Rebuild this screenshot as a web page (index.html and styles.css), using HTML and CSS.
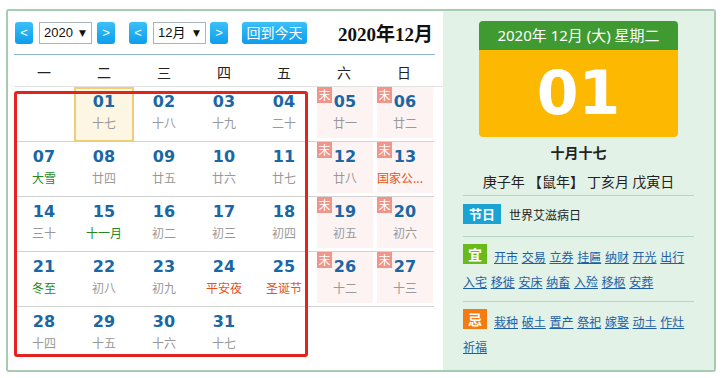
FILE: index.html
```html
<!DOCTYPE html>
<html lang="zh-CN">
  <head>
    <meta charset="UTF-8" />
    <title>万年历</title>
    <link rel="stylesheet" href="styles.css">
  </head>
  <body>
    <div class="calendar">
      <div class="cal-main">
        <div class="toolbar">
          <span class="btn nav first">&lt;</span>
          <div class="select year">2020<span class="arrow">▼</span></div>
          <span class="btn nav">&gt;</span>
          <span class="btn nav gap">&lt;</span>
          <div class="select month">12月<span class="arrow">▼</span></div>
          <span class="btn nav">&gt;</span>
          <span class="btn today-btn">回到今天</span>
          <span class="title">2020年12月</span>
        </div>

        <div class="week">
          <span>一</span><span>二</span><span>三</span><span>四</span><span>五</span><span>六</span><span>日</span>
        </div>

        <div class="days">
          <div class="day"></div>
          <div class="day today"><b>01</b><i>十七</i></div>
          <div class="day"><b>02</b><i>十八</i></div>
          <div class="day"><b>03</b><i>十九</i></div>
          <div class="day"><b>04</b><i>二十</i></div>
          <div class="day we"><div class="box"><em>末</em><b>05</b><i>廿一</i></div></div>
          <div class="day we"><div class="box"><em>末</em><b>06</b><i>廿二</i></div></div>

          <div class="day"><b>07</b><i class="term">大雪</i></div>
          <div class="day"><b>08</b><i>廿四</i></div>
          <div class="day"><b>09</b><i>廿五</i></div>
          <div class="day"><b>10</b><i>廿六</i></div>
          <div class="day"><b>11</b><i>廿七</i></div>
          <div class="day we"><div class="box"><em>末</em><b>12</b><i>廿八</i></div></div>
          <div class="day we"><div class="box"><em>末</em><b>13</b><i class="fest short">国家公...</i></div></div>

          <div class="day"><b>14</b><i>三十</i></div>
          <div class="day"><b>15</b><i class="term">十一月</i></div>
          <div class="day"><b>16</b><i>初二</i></div>
          <div class="day"><b>17</b><i>初三</i></div>
          <div class="day"><b>18</b><i>初四</i></div>
          <div class="day we"><div class="box"><em>末</em><b>19</b><i>初五</i></div></div>
          <div class="day we"><div class="box"><em>末</em><b>20</b><i>初六</i></div></div>

          <div class="day"><b>21</b><i class="term">冬至</i></div>
          <div class="day"><b>22</b><i>初八</i></div>
          <div class="day"><b>23</b><i>初九</i></div>
          <div class="day"><b>24</b><i class="fest">平安夜</i></div>
          <div class="day"><b>25</b><i class="fest">圣诞节</i></div>
          <div class="day we"><div class="box"><em>末</em><b>26</b><i>十二</i></div></div>
          <div class="day we"><div class="box"><em>末</em><b>27</b><i>十三</i></div></div>

          <div class="day last"><b>28</b><i>十四</i></div>
          <div class="day last"><b>29</b><i>十五</i></div>
          <div class="day last"><b>30</b><i>十六</i></div>
          <div class="day last"><b>31</b><i>十七</i></div>
          <div class="day last"></div>
          <div class="day last"></div>
          <div class="day last"></div>
        </div>

        <!-- annotation box over the weekdays -->
        <div class="highlight"></div>
      </div>

      <div class="side">
        <div class="date-card">
          <div class="card-head">2020年 12月 (大) 星期二</div>
          <div class="card-day">01</div>
        </div>
        <div class="lunar">十月十七</div>
        <div class="ganzhi">庚子年 【鼠年】 丁亥月 戊寅日</div>

        <div class="row festival">
          <span class="tag blue">节日</span><span class="fest-name">世界艾滋病日</span>
        </div>

        <div class="row deeds">
          <span class="tag mark green">宜</span>
          <a href="#">开市</a> <a href="#">交易</a> <a href="#">立券</a> <a href="#">挂匾</a> <a href="#">纳财</a> <a href="#">开光</a> <a href="#">出行</a> <a href="#">入宅</a> <a href="#">移徙</a> <a href="#">安床</a> <a href="#">纳畜</a> <a href="#">入殓</a> <a href="#">移柩</a> <a href="#">安葬</a>
        </div>

        <div class="row deeds">
          <span class="tag mark orange">忌</span>
          <a href="#">栽种</a> <a href="#">破土</a> <a href="#">置产</a> <a href="#">祭祀</a> <a href="#">嫁娶</a> <a href="#">动土</a> <a href="#">作灶</a> <a href="#">祈福</a>
        </div>
      </div>
    </div>
  </body>
</html>
```

FILE: styles.css
```css
* {
  box-sizing: border-box;
}

body {
  margin: 0;
  font-family: "Noto Sans CJK SC", sans-serif;
  color: #333;
  background: #fff;
}

.calendar {
  display: flex;
  width: 710px;
  height: 363px;
  margin: 9px 0 0 6px;
  border: 2px solid #a6cbb0;
  border-radius: 3px;
}

/* left: month grid */
.cal-main {
  position: relative;
  width: 435px;
  padding: 11px 0 0 6px;
  background: #fff;
}

.toolbar {
  display: flex;
  align-items: flex-start;
  width: 421px;
  height: 33px;
  border-bottom: 1px solid #8db7d4;
}
.btn {
  display: inline-block;
  height: 22px;
  line-height: 21px;
  border-radius: 3px;
  background: linear-gradient(to bottom, #3bc0f8, #0c9deb);
  color: #fff;
  text-align: center;
  font-family: "Liberation Sans", "Noto Sans CJK SC", sans-serif;
  font-size: 13px;
}
.nav {
  width: 18px;
  margin-left: 5px;
}
.nav.first {
  margin-left: 1px;
}
.nav.gap {
  margin-left: 14px;
}
.select {
  display: flex;
  align-items: center;
  justify-content: space-between;
  width: 53px;
  height: 22px;
  margin-left: 6px;
  padding: 0 5px 0 4px;
  border: 1px solid #a9b4bd;
  background: #fff;
  color: #111;
  font-family: "Liberation Sans", "Noto Sans CJK SC", sans-serif;
  font-size: 13px;
  line-height: 20px;
}
.select .arrow {
  font-family: "DejaVu Sans", sans-serif;
  font-size: 9px;
}
.select.month + .nav {
  margin-left: 4px;
}
.today-btn {
  width: 65px;
  margin-left: 14px;
  font-family: "Noto Sans CJK SC", sans-serif;
  font-size: 14px;
}
.title {
  margin-left: auto;
  margin-right: 2px;
  padding-top: 2px;
  line-height: 22px;
  font-family: "Liberation Serif", "Noto Sans CJK SC", serif;
  font-size: 19px;
  font-weight: bold;
  color: #111;
}

.week {
  display: grid;
  grid-template-columns: repeat(7, 60px);
  height: 32px;
  padding-top: 4px;
  border-bottom: 1px solid #e2e2e2;
  font-size: 14px;
  line-height: 26px;
  text-align: center;
  color: #222;
}

.days {
  display: grid;
  grid-template-columns: repeat(7, 60px);
  grid-auto-rows: 55px;
}
.day {
  position: relative;
  padding-top: 4px;
  border-bottom: 1px solid #d2d2d2;
  text-align: center;
}
.day.last {
  border-bottom: none;
}
.day b {
  display: block;
  font-family: "DejaVu Sans", sans-serif;
  font-size: 16px;
  line-height: 22px;
  color: #1b67a4;
}
.day i {
  display: block;
  font-style: normal;
  font-size: 12px;
  line-height: 20px;
  color: #999;
  white-space: nowrap;
}
.day i.term {
  color: #1f8a24;
}
.day i.fest {
  color: #e4531b;
}
.day i.short {
  text-align: left;
}
.day.today {
  padding-top: 2px;
  border: 2px solid #f0cd78;
  background: #fdf6e3;
}
.day.we {
  padding: 0 1px 3px 3px;
}
.day.we .box {
  position: relative;
  height: 100%;
  padding-top: 4px;
  background: #fef3f3;
}
.day.we em {
  position: absolute;
  top: 0;
  left: 0;
  width: 15px;
  height: 16px;
  background: #f1958b;
  color: #fff;
  font-style: normal;
  font-size: 12px;
  line-height: 16px;
}

.highlight {
  position: absolute;
  left: 6px;
  top: 80px;
  width: 294px;
  height: 266px;
  border: 3px solid #e3231d;
  border-radius: 3px;
}

/* right: day detail */
.side {
  flex: 1;
  padding: 10px 20px 0;
  background: #e2f2e7;
  text-align: center;
}
.date-card {
  width: 199px;
  margin: 0 auto;
  border-radius: 4px;
  overflow: hidden;
}
.card-head {
  height: 29px;
  line-height: 29px;
  background: #3f9a32;
  color: #fff;
  font-family: "Noto Sans", "Noto Sans CJK SC", sans-serif;
  font-size: 15px;
}
.card-day {
  height: 87px;
  line-height: 87px;
  background: #fdb902;
  color: #fff;
  font-family: "DejaVu Sans", sans-serif;
  font-size: 60px;
  font-weight: bold;
}
.lunar {
  margin-top: 5px;
  font-size: 14px;
  font-weight: bold;
  line-height: 20px;
  color: #222;
}
.ganzhi {
  margin-top: 9px;
  padding-bottom: 4px;
  font-size: 14px;
  line-height: 20px;
  color: #222;
}

.row {
  border-top: 1px solid #b3d7bf;
  text-align: left;
}
.tag {
  display: inline-block;
  height: 20px;
  line-height: 20px;
  color: #fff;
  font-size: 13px;
  font-weight: bold;
  text-align: center;
}
.tag.blue {
  width: 38px;
  background: #1ba3d3;
}
.tag.green {
  background: #6bba1c;
}
.tag.orange {
  background: #f47b12;
}
.festival {
  display: flex;
  align-items: center;
  padding: 8px 0 12px;
}
.fest-name {
  margin-left: 8px;
  font-size: 12px;
  color: #222;
}
.deeds {
  padding: 7px 0;
  font-size: 12px;
  line-height: 25px;
}
.tag.mark {
  float: left;
  width: 24px;
  margin-right: 7px;
  font-size: 14px;
}
.deeds a {
  margin-right: 1px;
  color: #1f5fa6;
}
```
